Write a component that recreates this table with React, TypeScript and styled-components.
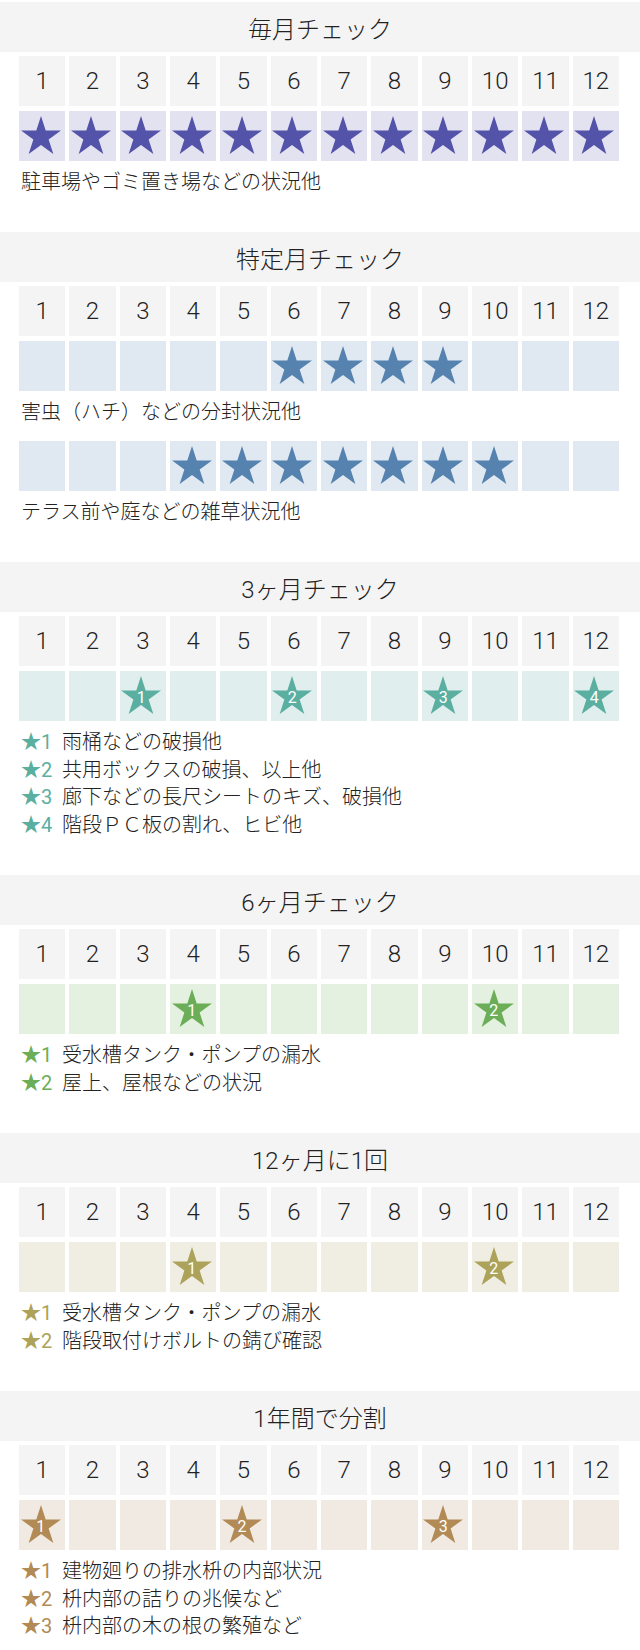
import {FunctionComponent} from "react";
import styled, {createGlobalStyle} from "styled-components";

const GlobalStyle = createGlobalStyle`
  html,
  body {
    margin: 0;
    padding: 0;
    background-color: #fff;
  }

  body {
    font-family: Roboto, "Noto Sans CJK JP", sans-serif;
    font-weight: 300;
    color: #222;
  }
`;

const Page = styled.div`
  width: 640px;
  padding-top: 2px;
`;

const Section = styled.section`
  margin-bottom: 36px;
`;

const SectionTitle = styled.h2`
  margin: 0;
  height: 50px;
  display: flex;
  align-items: center;
  justify-content: center;
  background-color: #f4f4f4;
  font-size: 24px;
  font-weight: 300;
`;

const Body = styled.div`
  padding: 0 21px 0 19px;
`;

const MonthGrid = styled.div<{$top: number}>`
  display: grid;
  grid-template-columns: repeat(12, 1fr);
  column-gap: 4px;
  margin-top: ${(p) => p.$top}px;
`;

const MonthCell = styled.div`
  height: 50px;
  display: flex;
  align-items: center;
  justify-content: center;
  background-color: #f4f4f4;
  font-size: 24px;
`;

const MarkCell = styled.div<{$bg: string}>`
  height: 50px;
  display: flex;
  align-items: center;
  justify-content: center;
  padding-right: 3px;
  box-sizing: border-box;
  background-color: ${(p) => p.$bg};
`;

const StarWrap = styled.div`
  position: relative;
  width: 40px;
  height: 38px;
  margin-bottom: 2px;

  svg {
    display: block;
  }
`;

const StarNum = styled.span`
  position: absolute;
  left: 0;
  right: 0;
  top: 13px;
  text-align: center;
  font-size: 16px;
  line-height: 18px;
  font-weight: 400;
  color: #fff;
`;

const Note = styled.p`
  margin: 7px 0 0;
  padding-left: 2px;
  font-size: 20px;
  line-height: 28px;
`;

const Legend = styled.ul`
  list-style: none;
  margin: 8px 0 0;
  padding: 0 0 0 2px;
  font-size: 20px;
  line-height: 27.5px;
`;

const LegendMark = styled.span<{$color: string}>`
  display: inline-block;
  width: 41px;
  color: ${(p) => p.$color};
  font-weight: 400;
`;

interface StarProps {
  color: string;
  num?: number;
}

const Star: FunctionComponent<StarProps> = ({color, num}) => (
  <StarWrap>
    <svg width="40" height="38" viewBox="0 0 40 38">
      <polygon
        fill={color}
        points="20,0 24.71,14.51 39.97,14.51 27.63,23.48 32.34,37.99 20,29.02 7.66,37.99 12.37,23.48 0.03,14.51 15.29,14.51"
      />
    </svg>
    {num ? <StarNum>{num}</StarNum> : null}
  </StarWrap>
);

type MarkRow = {
  // month -> 0 for a plain star, n for a numbered one
  marks: Record<number, number>;
  note?: string;
};

type SectionData = {
  title: string;
  star: string;
  cell: string;
  rows: MarkRow[];
  legend?: string[];
};

const months = [1, 2, 3, 4, 5, 6, 7, 8, 9, 10, 11, 12];

const plainFrom = (list: number[]) =>
  list.reduce((acc, m) => ({...acc, [m]: 0}), {} as Record<number, number>);

const sections: SectionData[] = [
  {
    title: "毎月チェック",
    star: "#5453aa",
    cell: "#e3e2f1",
    rows: [{marks: plainFrom(months), note: "駐車場やゴミ置き場などの状況他"}],
  },
  {
    title: "特定月チェック",
    star: "#5582ae",
    cell: "#e0e9f1",
    rows: [
      {marks: plainFrom([6, 7, 8, 9]), note: "害虫（ハチ）などの分封状況他"},
      {marks: plainFrom([4, 5, 6, 7, 8, 9, 10]), note: "テラス前や庭などの雑草状況他"},
    ],
  },
  {
    title: "3ヶ月チェック",
    star: "#5aafa1",
    cell: "#e0efee",
    rows: [{marks: {3: 1, 6: 2, 9: 3, 12: 4}}],
    legend: [
      "雨桶などの破損他",
      "共用ボックスの破損、以上他",
      "廊下などの長尺シートのキズ、破損他",
      "階段ＰＣ板の割れ、ヒビ他",
    ],
  },
  {
    title: "6ヶ月チェック",
    star: "#6bae57",
    cell: "#e5f1e0",
    rows: [{marks: {4: 1, 10: 2}}],
    legend: ["受水槽タンク・ポンプの漏水", "屋上、屋根などの状況"],
  },
  {
    title: "12ヶ月に1回",
    star: "#aca259",
    cell: "#f0eee3",
    rows: [{marks: {4: 1, 10: 2}}],
    legend: ["受水槽タンク・ポンプの漏水", "階段取付けボルトの錆び確認"],
  },
  {
    title: "1年間で分割",
    star: "#b28a55",
    cell: "#f1eae3",
    rows: [{marks: {1: 1, 5: 2, 9: 3}}],
    legend: [
      "建物廻りの排水枡の内部状況",
      "枡内部の詰りの兆候など",
      "枡内部の木の根の繁殖など",
    ],
  },
];

const CheckSection: FunctionComponent<{data: SectionData}> = ({data}) => (
  <Section>
    <SectionTitle>{data.title}</SectionTitle>
    <Body>
      <MonthGrid $top={4}>
        {months.map((m) => (
          <MonthCell key={m}>{m}</MonthCell>
        ))}
      </MonthGrid>

      {data.rows.map((row, i) => (
        <div key={i}>
          <MonthGrid $top={i === 0 ? 5 : 15}>
            {months.map((m) => (
              <MarkCell key={m} $bg={data.cell}>
                {m in row.marks ? (
                  <Star color={data.star} num={row.marks[m] || undefined} />
                ) : null}
              </MarkCell>
            ))}
          </MonthGrid>
          {row.note && <Note>{row.note}</Note>}
        </div>
      ))}

      {data.legend && (
        <Legend>
          {data.legend.map((text, i) => (
            <li key={i}>
              <LegendMark $color={data.star}>★{i + 1}</LegendMark>
              {text}
            </li>
          ))}
        </Legend>
      )}
    </Body>
  </Section>
);

const App: FunctionComponent = () => (
  <Page>
    <GlobalStyle />
    {sections.map((s) => (
      <CheckSection key={s.title} data={s} />
    ))}
  </Page>
);

export default App;
